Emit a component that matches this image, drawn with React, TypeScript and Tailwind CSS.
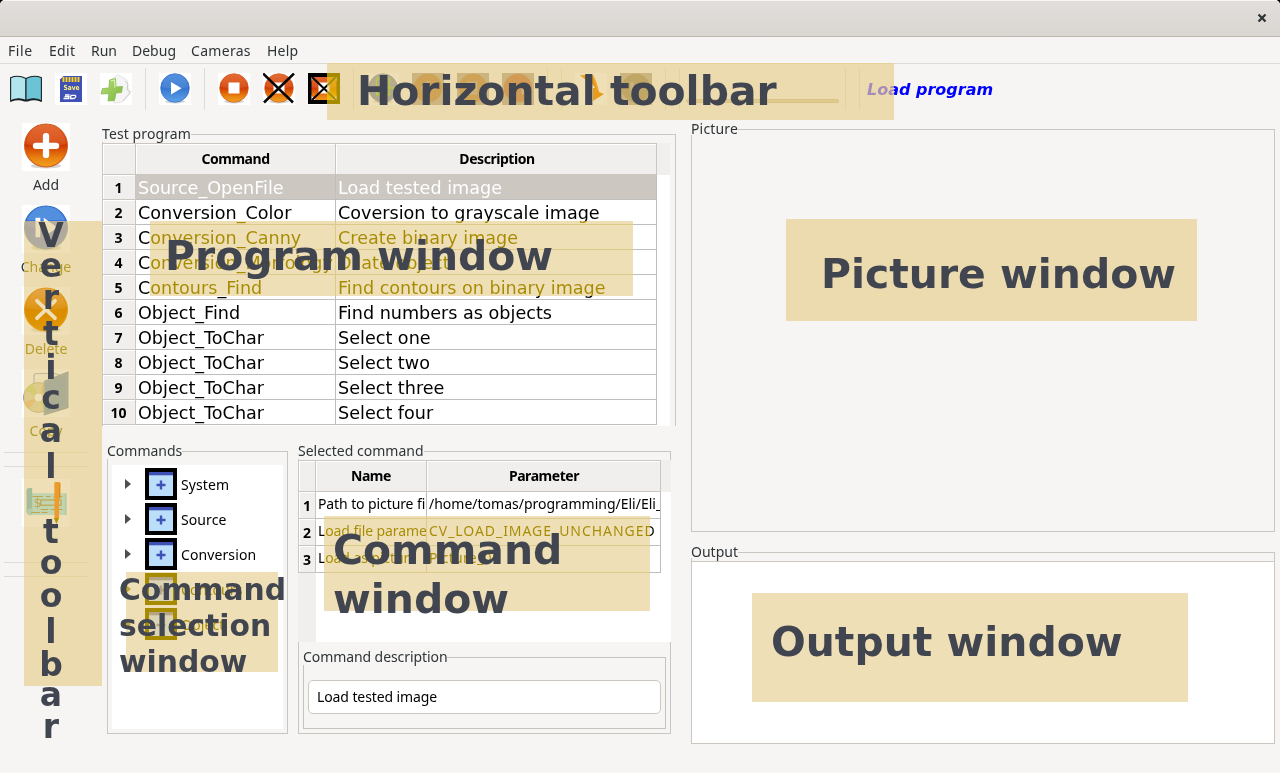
import React from 'react';

const ui = "font-['Noto_Sans','Open_Sans',sans-serif]";

function Svg({ s = 32, children, bg = true }: { s?: number; children: React.ReactNode; bg?: boolean }) {
  return (
    <svg width={s} height={s} viewBox="0 0 32 32" className="block shrink-0">
      {bg && <rect width="32" height="32" fill="#fff" />}
      {children}
    </svg>
  );
}

function Defs() {
  return (
    <svg width="0" height="0" className="absolute">
      <defs>
        <linearGradient id="or" x1="0" y1="0" x2="0" y2="1">
          <stop offset="0" stopColor="#e05a1e" />
          <stop offset=".35" stopColor="#d9480a" />
          <stop offset=".5" stopColor="#cf3a00" />
          <stop offset=".8" stopColor="#ea8412" />
          <stop offset="1" stopColor="#f0a020" />
        </linearGradient>
        <linearGradient id="dor" x1="0" y1="0" x2="0" y2="1">
          <stop offset="0" stopColor="#d8405c" />
          <stop offset=".35" stopColor="#d01a18" />
          <stop offset=".5" stopColor="#b40400" />
          <stop offset=".8" stopColor="#c41800" />
          <stop offset="1" stopColor="#d83810" />
        </linearGradient>
        <linearGradient id="bl" x1="0" y1="0" x2="0" y2="1">
          <stop offset="0" stopColor="#3f83dc" />
          <stop offset=".5" stopColor="#3576cf" />
          <stop offset="1" stopColor="#5ea3ea" />
        </linearGradient>
        <linearGradient id="dbl" x1="0" y1="0" x2="0" y2="1">
          <stop offset="0" stopColor="#3f83dc" />
          <stop offset=".33" stopColor="#3f83dc" />
          <stop offset=".34" stopColor="#1e58d8" />
          <stop offset="1" stopColor="#2868e0" />
        </linearGradient>
        <linearGradient id="gr" x1="0" y1="0" x2="1" y2="1">
          <stop offset="0" stopColor="#b7e07a" />
          <stop offset="1" stopColor="#7cb63c" />
        </linearGradient>
      </defs>
    </svg>
  );
}

function Ball({ fill, rim }: { fill: string; rim: string }) {
  return (
    <>
      <ellipse cx="16" cy="28.6" rx="10" ry="1.8" fill="#d4d4d4" />
      <circle cx="16" cy="15" r="14.3" fill={fill} stroke={rim} strokeWidth=".7" />
      <path d="M3 14a13 13 0 0 1 26 0q-13 3-26 0z" fill="#fff" opacity=".1" />
    </>
  );
}
const Orange = () => <Ball fill="url(#or)" rim="#d25a1c" />;
const Blue = () => <Ball fill="url(#bl)" rim="#2f6cc4" />;

const BookIcon = () => (
  <Svg bg={false}>
    <path d="M.6 4.700Q8 1.600 16 5.400v22Q8 24 .6 28z" fill="#b1e4ec" stroke="#182022" strokeWidth="1.100" />
    <path d="M31.400 4.700Q24 1.600 16 5.400v22Q24 24 31.400 28z" fill="#6cc3d5" stroke="#182022" strokeWidth="1.100" />
    <path d="M.6 28Q8 25.200 14 27.600h4Q24 25.200 31.400 28" fill="none" stroke="#182022" strokeWidth="1.600" />
  </Svg>
);
const SaveIcon = () => (
  <Svg>
    <path d="M8.500 3H27v26H5V6.500z" fill="#3f51b5" />
    <path d="M8.500 4v5M11.500 4v5M14.500 4v5M17.500 4v5M20.500 4v5M23.500 4v5" stroke="#ffd21f" strokeWidth="1.900" />
    <text x="16.500" y="17.400" textAnchor="middle" fontSize="7" fontWeight="bold" fontFamily="DejaVu Sans" fill="#fff176" textLength="16" lengthAdjust="spacingAndGlyphs">Save</text>
    <path d="M10 22h4.500M9.500 23.700h4.500l-.5 1.800H8.500M16 22.300h4q2 1.500-1 3.200h-3.600z" fill="none" stroke="#fff" strokeWidth="1.300" />
  </Svg>
);
const NewIcon = () => (
  <Svg>
    <path d="M13 5l5-3 9 5 1 8 3 4-9 10-8 1-6-8z" fill="#f5f5f5" stroke="#dedede" strokeWidth=".8" />
    <path d="M25 8l3 3-1 5 3 4-7 8" fill="none" stroke="#cacaca" strokeWidth="1" />
    <path d="M9.500 7l6-1.500 .5 8.500 6.500-.5-1 6-5.500.5-1.500 7.500-6.500.5 1-7.500-8 .5 1.500-5.500 6.500-.5z" fill="url(#gr)" stroke="#86b951" strokeWidth=".8" />
    <path d="M10.700 8l3.800-1 .5 7.500" fill="none" stroke="#d9f2b4" strokeWidth="1.200" />
  </Svg>
);
const PlayIcon = () => <Svg><Blue /><path d="M12 9v12.500L22.500 15.300z" fill="#fff" /></Svg>;
const StopIcon = ({ kind = 0 }: { kind?: number }) => (
  <Svg>
    <Orange />
    <rect x="10.500" y="9.500" width="11" height="11" fill="#fff" />
    {kind === 1 && <path d="M0 0.500l30 29M31 .5L1 29.500" stroke="#080808" strokeWidth="2.600" />}
    {kind === 2 && (
      <>
        <path d="M0 0h32v31H0zM3.500 4v23h25V4z" fill="#000" fillRule="evenodd" />
        <path d="M4 4l24 23M28 4L4 27" stroke="#050505" strokeWidth="2" />
      </>
    )}
  </Svg>
);
const FocusIcon = () => (
  <Svg>
    <Ball fill="#2050c0" rim="#2050c0" />
    <rect x="9.500" y="5.500" width="13" height="16" fill="none" stroke="#40d050" strokeWidth="1.300" strokeDasharray="9 3" />
    <path d="M5 15h6M21 15h6" stroke="#40d050" strokeWidth="1.500" />
  </Svg>
);
const DimIcon = ({ d, c = '#8b4a78' }: { d: string; c?: string }) => (
  <Svg bg={false}>
    <rect width="32" height="32" fill="#837eae" />
    <circle cx="16" cy="15" r="14.300" fill={c} />
    <path d={d} fill="none" stroke="#837eae" strokeWidth="3" />
  </Svg>
);
const TurnIcon = () => (
  <Svg>
    <path d="M5 2h13q4 7 6 17l5 2-11 7V15l2 0q-2-4-6-5l1 4-5-6 2 0z" fill="#e83428" />
    <path d="M6 3h12q3 5 5 14" stroke="#ff7048" fill="none" />
  </Svg>
);
const AddIcon = () => <Svg s={48}><Orange /><path d="M16 8.700v12.600M9.300 15.200h13.400" stroke="#fff" strokeWidth="4.200" strokeLinecap="round" /></Svg>;
const ChangeIcon = () => <Svg s={48}><Ball fill="url(#dbl)" rim="#2f6cc4" /><path d="M9 8.500h3.200v13H9zM14.500 8.500v13L23.500 15z" fill="#fff" /></Svg>;
const DeleteIcon = () => <Svg s={48}><Ball fill="url(#dor)" rim="#d03020" /><path d="M10 9.200l12 11.600M22 9.200L10 20.800" stroke="#fff" strokeWidth="2.500" strokeLinecap="round" /></Svg>;
const CopyIcon = () => (
  <Svg s={48}>
    <path d="M8 12V5q0-2 2-2h12l5 2v14H8z" fill="#f8fafa" stroke="#5a90d8" strokeWidth=".8" />
    <circle cx="11" cy="19" r="10" fill="#c8c4c0" stroke="#8884a0" strokeWidth=".6" />
    <path d="M11 19L2 14q2-3 5-4.500zM11 19l9 5q-2 3-5 4.500z" fill="#a0c8a0" />
    <path d="M11 19L1.500 22q1 3 3 4.700zM11 19l3-9.500q3 1 5 4z" fill="#d8a0a0" />
    <circle cx="11" cy="19" r="3" fill="#fff" stroke="#aaa" strokeWidth=".6" />
    <path d="M14.500 8L31 1.500V26l-16.500 5z" fill="#1050b8" />
    <path d="M15 8.500L30 3v22l-15 5z" fill="#1868cc" stroke="#4888c8" strokeWidth=".5" />
  </Svg>
);
const ChequeIcon = () => (
  <Svg s={48}>
    <path d="M5 9.500h24.500V24H5z" fill="#60dcf4" />
    <path d="M3 7.500q0-1.500 2-1.500h1.800v15Q3 21 3 23z" fill="#0098d8" />
    <path d="M3 21q1-1.500 4-1.500V24q-4 1-4-3z" fill="#30c4e4" />
    <path d="M28.500 9.500h1.200V24h-1.200z" fill="#30c0e0" />
    <path d="M7 11.700h7M16 11.700h3M21 11.700h6M12.500 20.300h5M19 20.300h8M6 22.300h6M13 22.300h4" stroke="#5f4e6d" strokeWidth=".7" />
    <rect x="12.500" y="14" width="13.500" height="3.500" fill="none" stroke="#5f4e6d" strokeWidth=".8" />
    <text x="7.800" y="18.800" fontSize="8" fontFamily="DejaVu Sans" fill="#5f4e6d">$</text>
    <path d="M21.500 3q0-1 1-1h2.200q1 0 1 1v10h-1v13h-3z" fill="#ff303d" />
    <path d="M21.200 26h3.500l-1.700 4z" fill="#44210a" />
    <path d="M25 3v10" stroke="#6b1b30" strokeWidth=".6" />
  </Svg>
);
const NodeIcon = () => (
  <Svg bg={false}>
    <rect width="32" height="32" fill="#000" />
    <rect x="4" y="4" width="24" height="24" fill="#bbdefb" />
    <rect x="4" y="4" width="24" height="3" fill="#3f51b5" />
    <rect x="4" y="7" width="24" height="1" fill="#94b4e8" />
    <path d="M16 12.500v9M11.500 17h9" stroke="#3f51b5" strokeWidth="2.400" />
  </Svg>
);

const VSep = () => <div className="h-[42px] w-px shrink-0 bg-[#dcdbd9]" />;
const HPair = () => (
  <div className="flex h-[15px] w-[84px] flex-col justify-between">
    <div className="h-px bg-[#dcdbd9]" />
    <div className="h-px bg-[#dcdbd9]" />
  </div>
);

function GroupTitle({ children, className = 'tracking-normal' }: { children: string; className?: string }) {
  return (
    <h2 className={`absolute -left-px -top-[11px] h-[18px] whitespace-nowrap bg-[#f6f5f4] text-[14px] leading-[20px] text-[#2e3436] ${className}`}>
      {children}
    </h2>
  );
}

function Tint({ className }: { className: string }) {
  return (
    <>
      <div className={`pointer-events-none absolute bg-[#b19f00] mix-blend-screen ${className}`} />
      <div className={`pointer-events-none absolute bg-[#efdfb7] mix-blend-multiply ${className}`} />
    </>
  );
}
const big = "pointer-events-none absolute whitespace-pre font-['DejaVu_Sans',sans-serif] font-bold text-[#41454f]";

const program: [string, string][] = [
  ['Source_OpenFile', 'Load tested image'],
  ['Conversion_Color', 'Coversion to grayscale image'],
  ['Conversion_Canny', 'Create binary image'],
  ['Conversion_Morfology', 'Dilate object'],
  ['Contours_Find', 'Find contours on binary image'],
  ['Object_Find', 'Find numbers as objects'],
  ['Object_ToChar', 'Select one'],
  ['Object_ToChar', 'Select two'],
  ['Object_ToChar', 'Select three'],
  ['Object_ToChar', 'Select four'],
];
const params: [string, string, string][] = [
  ['Path to picture fi', '/home/tomas/programming/Eli/Eli_', 'tracking-normal'],
  ['Load file parame', 'CV_LOAD_IMAGE_UNCHANGED', 'tracking-[0.95px]'],
  ['Load as picture', 'Picture_01', 'tracking-[0.3px]'],
];
const letters: [string, string][] = [
  ['V', 'top-[218px]'], ['e', 'top-[248px]'], ['r', 'top-[280px]'], ['t', 'top-[316px]'], ['i', 'top-[350px]'],
  ['c', 'top-[380px]'], ['a', 'top-[413px]'], ['l', 'top-[449px]'], ['t', 'top-[514px]'], ['o', 'top-[545px]'],
  ['o', 'top-[578px]'], ['l', 'top-[614px]'], ['b', 'top-[647px]'], ['a', 'top-[677px]'], ['r', 'top-[709px]'],
];

function Tool({ icon, label }: { icon: React.ReactNode; label: string }) {
  return (
    <div className="flex h-[82px] flex-col items-center">
      {icon}
      <span className="mt-[4px] text-[14px] leading-[20px] text-[#2e3436]">{label}</span>
    </div>
  );
}

const headCell = 'flex items-center justify-center border-b border-r border-t border-[#cbc6c0] pb-[2px] tracking-[-0.45px] shadow-[inset_1px_1px_0_#fff]';

export default function App() {
  return (
    <div className="bg-black">
      <div className={`relative flex h-[773px] w-[1280px] flex-col overflow-hidden rounded-t-[5px] bg-[#f6f5f4] ${ui}`}>
        <Defs />
        <header className="flex h-[37px] shrink-0 items-center justify-end border-b border-t border-b-[#bfb8b1] border-t-[#f6f5f4] bg-linear-to-b from-[#e1dedb] to-[#dad6d2] pb-px pr-[13px]">
          <svg width="10" height="10" viewBox="0 0 10 10"><path d="M1.500 1.500l7 7M8.500 1.500l-7 7" stroke="#2e3436" strokeWidth="2.300" /></svg>
        </header>
        <nav className="flex h-[27px] shrink-0 items-center gap-[16px] border-b border-[#dcdad7] pl-[8px] text-[14px] text-[#2e3436]">
          <span className="w-[25px] tracking-[0.6px]">File</span>
          <span className="w-[26px] tracking-[0.3px]">Edit</span>
          <span className="w-[25px]">Run</span>
          <span className="w-[43px]">Debug</span>
          <span className="w-[60px] tracking-[0.3px]">Cameras</span>
          <span className="tracking-[0.2px]">Help</span>
        </nav>
        <div className="flex h-[52px] shrink-0 items-center gap-[13px] pb-[2px] pl-[10px]">
          <BookIcon /><SaveIcon /><NewIcon />
          <VSep /><PlayIcon />
          <VSep /><StopIcon /><StopIcon kind={1} /><StopIcon kind={2} />
          <VSep /><FocusIcon /><DimIcon d="M16 8v14M9 15h14" /><DimIcon d="M10 10h9v8M12 20h8" /><DimIcon d="M11 10v11M21 10v11" c="#963078" />
          <VSep /><VSep /><TurnIcon /><DimIcon d="M12 9v12" c="#58528c" />
          <VSep /><VSep />
          <div className="-mx-[7px] mt-[23px] h-[4px] w-[153px] shrink-0 rounded-full border border-[#b0a8b8] bg-[#cdbfc8]" />
          <VSep /><VSep />
          <span className="-ml-[6px] mt-[2px] whitespace-nowrap font-['DejaVu_Sans',sans-serif] text-[16px] font-bold italic text-[#0000ff]">Load program</span>
        </div>

        <main className="flex min-h-0 flex-1">
          <aside className="flex w-[92px] shrink-0 flex-col items-center pt-[7px]">
            <Tool icon={<AddIcon />} label="Add" />
            <Tool icon={<ChangeIcon />} label="Change" />
            <Tool icon={<DeleteIcon />} label="Delete" />
            <Tool icon={<CopyIcon />} label="Copy" />
            <div className="mt-px flex flex-col items-center gap-[12px]">
              <HPair />
              <ChequeIcon />
              <div className="mt-[23px]"><HPair /></div>
            </div>
          </aside>

          <div className="ml-[10px] flex w-[574px] shrink-0 flex-col pt-[18px]">
            <section className="relative h-[292px] shrink-0 border border-b-0 border-[#cbc6c0] pt-[8px]">
              <GroupTitle className="tracking-[0.1px]">Test program</GroupTitle>
              <div className="flex h-[283px] w-[567px] flex-col bg-white">
                <div className="flex h-[32px] shrink-0 bg-[#f0efee] text-[14px] font-bold text-black">
                  <div className="w-[33px] border-b border-r border-t border-[#cbc6c0] shadow-[inset_1px_1px_0_#fff]" />
                  <div className={`w-[200px] ${headCell}`}>Command</div>
                  <div className={`w-[321px] pl-[2px] ${headCell}`}>Description</div>
                </div>
                {program.map(([a, b], i) => (
                  <div key={i} className="flex h-[25px] shrink-0 font-['DejaVu_Sans',sans-serif] text-[17.6px] leading-[26px]">
                    <div className={`w-[33px] border-b border-r border-[#cbc6c0] bg-[#f0efee] pr-px text-center text-[14px] font-bold leading-[25px] shadow-[inset_1px_1px_0_#fff] ${ui}`}>{i + 1}</div>
                    <div className={`w-[200px] overflow-hidden whitespace-nowrap border-b border-r border-[#bebebe] pl-[2px] ${i === 0 ? 'bg-[#cdc7c2] text-white' : 'text-black'}`}>{a}</div>
                    <div className={`w-[321px] overflow-hidden whitespace-nowrap border-b border-r border-[#bebebe] pl-[2px] ${i === 0 ? 'bg-[#cdc7c2] text-white' : 'text-black'}`}>{b}</div>
                  </div>
                ))}
              </div>
            </section>

            <div className="ml-[5px] mt-[25px] flex gap-[10px]">
              <section className="relative h-[283px] w-[181px] border border-[#c8c6c3] px-[4px] pb-[4px] pt-[13px]">
                <GroupTitle>Commands</GroupTitle>
                <ul className="flex h-[264px] flex-col gap-[3px] bg-white pl-[13px] pt-[3px]">
                  {['System', 'Source', 'Conversion', 'Contours', 'Object'].map((n) => (
                    <li key={n} className="flex h-[32px] items-center text-[14px] text-black">
                      <svg width="6" height="10" viewBox="0 0 6 10"><path d="M0 0l6 5-6 5z" fill="#4c4f50" /></svg>
                      <span className="ml-[14px]"><NodeIcon /></span>
                      <span className="ml-[4px] tracking-[0.1px]">{n}</span>
                    </li>
                  ))}
                </ul>
              </section>

              <section className="relative flex h-[283px] w-[373px] flex-col border border-[#c8c6c3] pt-[8px]">
                <GroupTitle>Selected command</GroupTitle>
                <div className="relative -mx-px flex h-[182px] shrink-0 bg-white">
                  <div className="w-[18px] shrink-0 bg-[#f0efee]" />
                  <div className="absolute inset-x-0 top-0 flex flex-col">
                    <div className="flex h-[32px] bg-[#f0efee] text-[14px] font-bold text-black">
                      <div className="w-[18px] border border-[#cbc6c0] shadow-[inset_1px_1px_0_#fff]" />
                      <div className={`w-[111px] ${headCell}`}>Name</div>
                      <div className={`w-[234px] pl-px ${headCell}`}>Parameter</div>
                    </div>
                    {params.map(([a, b, track], i) => (
                      <div key={i} className="flex h-[27px] text-[14px] leading-[24px] text-black">
                        <div className="w-[18px] border-x border-b border-[#cbc6c0] bg-[#f0efee] text-center font-bold leading-[27px] shadow-[inset_1px_1px_0_#fff]">{i + 1}</div>
                        <div className="w-[111px] overflow-hidden whitespace-nowrap border-b border-r border-[#bebebe] pl-[2px] tracking-[-0.1px]">{a}</div>
                        <div className={`w-[234px] overflow-hidden whitespace-nowrap border-b border-r border-[#bebebe] pl-[2px] ${track}`}>{b}</div>
                      </div>
                    ))}
                  </div>
                </div>
                <div className="relative mx-[4px] mt-[15px] h-[72px] border border-[#c8c2bc] px-[4px] pt-[22px]">
                  <GroupTitle className="tracking-[-0.08px]">Command description</GroupTitle>
                  <div className="flex h-[34px] items-center rounded-[5px] border border-[#cdc7c2] bg-white pb-[2px] pl-[8px] text-[14px] tracking-[-0.1px] text-black">Load tested image</div>
                </div>
              </section>
            </div>
          </div>

          <div className="ml-[15px] flex w-[584px] shrink-0 flex-col pt-[13px]">
            <section className="relative h-[403px] border border-[#cbc6c0]">
              <h2 className="absolute -left-px -top-[8px] h-[13px] whitespace-nowrap bg-[#f6f5f4] text-[14px] leading-[14px] tracking-[0.15px] text-[#2e3436]">Picture</h2>
            </section>
            <section className="relative mt-[20px] border border-b-0 border-[#cbc6c0] pt-[8px]">
              <h2 className="absolute -left-px -top-[11px] h-[16px] whitespace-nowrap bg-[#f6f5f4] text-[14px] leading-[20px] text-[#2e3436]">Output</h2>
              <div className="-mx-px h-[183px] border border-[#cbc6c0] bg-white" />
            </section>
          </div>
        </main>

        <Tint className="left-[327px] top-[63px] h-[57px] w-[567px]" />
        <Tint className="left-[24px] top-[221px] h-[465px] w-[78px]" />
        <Tint className="left-[150px] top-[221px] h-[75px] w-[483px]" />
        <Tint className="left-[126px] top-[572px] h-[100px] w-[152px]" />
        <Tint className="left-[324px] top-[516px] h-[95px] w-[326px]" />
        <Tint className="left-[786px] top-[219px] h-[102px] w-[411px]" />
        <Tint className="left-[752px] top-[593px] h-[109px] w-[436px]" />

        <div className={`${big} left-[357px] top-[67px] text-[40.9px] leading-[49px]`}>Horizontal toolbar</div>
        <div className={`${big} left-[165px] top-[232px] text-[40.9px] leading-[49px]`}>Program window</div>
        <div className={`${big} left-[821px] top-[250px] text-[40.9px] leading-[49px]`}>Picture window</div>
        <div className={`${big} left-[771px] top-[618px] text-[40.9px] leading-[49px]`}>Output window</div>
        <div className={`${big} left-[333px] top-[526px] text-[40.9px] leading-[49px]`}>{'Command\nwindow'}</div>
        <div className={`${big} left-[119px] top-[572px] text-[29.8px] leading-[36px]`}>{'Command\nselection\nwindow'}</div>
        {letters.map(([c, top], i) => (
          <div key={i} className={`${big} left-[31px] w-[40px] text-center text-[33px] leading-[36px] ${top}`}>{c}</div>
        ))}
      </div>
    </div>
  );
}
